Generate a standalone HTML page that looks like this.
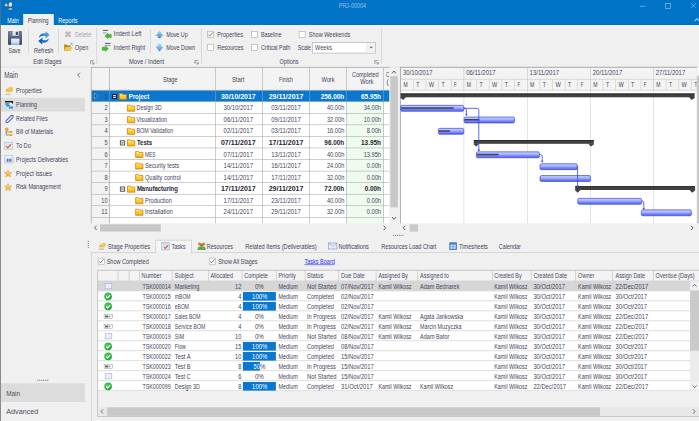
<!DOCTYPE html>
<html><head><meta charset="utf-8"><style>
html,body{margin:0;padding:0;background:#f0f0f0;}
body{width:699px;height:421px;overflow:hidden;}
svg{display:block;font-family:'Liberation Sans', sans-serif;}
</style></head><body>
<svg width="699" height="421" viewBox="0 0 699 421">
<rect x="0" y="0" width="699" height="421" fill="#f0f0f0" />
<rect x="0" y="0" width="699" height="25" fill="#0173c7" />
<g transform="translate(3.6,1.2)"><path d="M4.2 7.2 Q5.6 9.2 7.8 8.6 Q9 8.2 8.8 6.8 Z" fill="#ffffff" stroke="#2a3a55" stroke-width="0.5"/><path d="M0.6 4.2 L2.6 1.2 L3.2 2.8 L4.4 3.6 L3.4 5.8 Z" fill="#d8dce4" stroke="#2a3a55" stroke-width="0.4"/><path d="M5.4 1.2 L7.4 0.8 L8.6 2.4 L8.4 5.4 L6.2 5.8 L5 4 Z" fill="#eef0f4" stroke="#2a3a55" stroke-width="0.4"/><rect x="4.4" y="4.2" width="1" height="1" fill="#6ab4e8"/></g>
<rect x="0" y="0" width="0.8" height="25" fill="#4f7396" />
<text x="338.8" y="7.75" font-size="6.5" fill="#98c0ea" textLength="27.3" lengthAdjust="spacingAndGlyphs" >PRJ-00004</text>
<rect x="640" y="5.85" width="5.5" height="0.7" fill="#8cbce8" />
<rect x="665.6" y="3.6" width="5" height="4.8" fill="none" stroke="#8cbce8" stroke-width="0.7"/>
<path d="M690.8 3.2 L695.8 8.2 M695.8 3.2 L690.8 8.2" fill="none" stroke="#9cc6ec" stroke-width="0.6" />
<text x="7.2" y="22.65" font-size="6.5" fill="#ffffff" textLength="11.6" lengthAdjust="spacingAndGlyphs" >Main</text>
<rect x="23.2" y="14" width="30.6" height="11" fill="#f0f0f0" />
<text x="27.8" y="22.65" font-size="6.5" fill="#3e3e52" textLength="20.8" lengthAdjust="spacingAndGlyphs" >Planning</text>
<text x="58.2" y="22.65" font-size="6.5" fill="#ffffff" textLength="19.4" lengthAdjust="spacingAndGlyphs" >Reports</text>
<path d="M694.8 21 L697 18.6 L699.2 21" fill="none" stroke="#ffffff" stroke-width="0.9" />
<rect x="0" y="25" width="1" height="396" fill="#8a8a8a" />
<rect x="1" y="66.7" width="698" height="0.6" fill="#d6d6d6" />
<defs><linearGradient id="sv" x1="0" y1="0" x2="0" y2="1"><stop offset="0" stop-color="#6c7a98"/><stop offset="1" stop-color="#3c4a6a"/></linearGradient><linearGradient id="svl" x1="0" y1="0" x2="0" y2="1"><stop offset="0" stop-color="#f4f6fa"/><stop offset="0.6" stop-color="#c8dcf2"/><stop offset="1" stop-color="#7ab0e6"/></linearGradient><linearGradient id="rf1" x1="0" y1="0" x2="1" y2="0"><stop offset="0" stop-color="#0e5cc4"/><stop offset="1" stop-color="#5cb2f4"/></linearGradient><linearGradient id="rf2" x1="1" y1="0" x2="0" y2="0"><stop offset="0" stop-color="#2a7ee0"/><stop offset="1" stop-color="#0c56c0"/></linearGradient></defs>
<g transform="translate(8,31)"><rect x="0" y="0" width="14" height="14" rx="1" fill="url(#sv)"/><rect x="2.8" y="0" width="7.9" height="4.7" fill="#e2e6ec"/><rect x="3.2" y="0" width="1.2" height="4.7" fill="#55617c"/><rect x="7.8" y="0.8" width="2.1" height="3.2" fill="#3e4a66"/><rect x="3.1" y="7.6" width="8.3" height="6.4" fill="url(#svl)"/></g>
<text x="8.4" y="53.25" font-size="6.5" fill="#44445a" textLength="12.09" lengthAdjust="spacingAndGlyphs" >Save</text>
<rect x="27.95" y="29" width="0.7" height="24" fill="#cfcfcf" />
<g transform="translate(38,31)"><path d="M0.8 6.8 C1.5 3 5 1.8 7.8 2.4 L7.6 0.2 L11.8 4 L7.4 7.4 L7.6 5 C5 4.4 2.6 5 0.8 6.8 Z" fill="url(#rf1)"/><path d="M11.2 7.2 C10.5 11 7 12.2 4.2 11.6 L4.4 13.8 L0.2 10 L4.6 6.6 L4.4 9 C7 9.6 9.4 9 11.2 7.2 Z" fill="url(#rf2)"/></g>
<text x="33.9" y="53.25" font-size="6.5" fill="#44445a" textLength="19.45" lengthAdjust="spacingAndGlyphs" >Refresh</text>
<rect x="58.25" y="29" width="0.7" height="24" fill="#cfcfcf" />
<g transform="translate(64.5,30.8)"><path d="M1 1 L6 6 M6 1 L1 6" stroke="#bdbdbd" stroke-width="2.2"/></g>
<text x="75" y="36.55" font-size="6.5" fill="#a4a4ae" textLength="16.29" lengthAdjust="spacingAndGlyphs" >Delete</text>
<g transform="translate(63.9,43)"><path d="M0.3 1.6 L2.8 1.6 L3.6 2.6 L6.6 2.6 L6.6 7.8 L0.3 7.8 Z" fill="#b88418"/><path d="M1.6 4 L8.6 4 L7 7.8 L0.3 7.8 Z" fill="#f4c848"/><path d="M6.4 0.3 L8.2 0.3 L8.2 2.6" fill="none" stroke="#6a88b8" stroke-width="0.6"/><path d="M7.2 1.2 L5.6 3.2" stroke="#6a88b8" stroke-width="0.5"/></g>
<text x="75" y="50.25" font-size="6.5" fill="#44445a" textLength="13.14" lengthAdjust="spacingAndGlyphs" >Open</text>
<text x="33.2" y="63.75" font-size="6.5" fill="#3e3e5a" textLength="28.38" lengthAdjust="spacingAndGlyphs" >Edit Stages</text>
<g transform="translate(90.2,60.3)"><path d="M0.4 3.8 L0.4 0.4 L3.8 0.4" stroke="#7a7a7a" stroke-width="0.7" fill="none"/><path d="M1.6 1.6 L3.8 3.8 M3.8 2.2 L3.8 3.8 L2.2 3.8" stroke="#7a7a7a" stroke-width="0.7" fill="none"/></g>
<rect x="96.45" y="28" width="0.7" height="36" fill="#cfcfcf" />
<g transform="translate(102,29.5)"><rect x="0.9" y="0.4" width="5.2" height="1.1" fill="#56668a"/><rect x="0.9" y="2.9" width="3.4" height="0.9" fill="#8090aa"/><path d="M2.8 6.4 L6 3.6 L6 4.9 L9.3 4.9 L9.3 8 L6 8 L6 9.2 Z" fill="#48ba30" stroke="#2f9a22" stroke-width="0.4"/></g>
<text x="113.6" y="36.45" font-size="6.5" fill="#44445a" textLength="27.86" lengthAdjust="spacingAndGlyphs" >Indent Left</text>
<g transform="translate(102,42.5)"><rect x="2.9" y="0.4" width="5.5" height="1.1" fill="#56668a"/><rect x="2.9" y="2.7" width="5.5" height="0.9" fill="#8090aa"/><path d="M6.5 6.2 L3.4 3.5 L3.4 4.7 L0.1 4.7 L0.1 7.8 L3.4 7.8 L3.4 9 Z" fill="#48ba30" stroke="#2f9a22" stroke-width="0.4"/></g>
<text x="113.6" y="49.75" font-size="6.5" fill="#44445a" textLength="31.54" lengthAdjust="spacingAndGlyphs" >Indent Right</text>
<rect x="150.05" y="29" width="0.7" height="24" fill="#cfcfcf" />
<defs><linearGradient id="mu" x1="0" y1="0" x2="0" y2="1"><stop offset="0" stop-color="#b4dcf8"/><stop offset="1" stop-color="#3c82d2"/></linearGradient><linearGradient id="md" x1="0" y1="0" x2="0" y2="1"><stop offset="0" stop-color="#b4dcf8"/><stop offset="1" stop-color="#3c82d2"/></linearGradient></defs>
<g transform="translate(155.9,30.7)"><path d="M3.6 0.2 L7.2 5 L5 5 L5 7.3 L2.2 7.3 L2.2 5 L0 5 Z" fill="url(#mu)" stroke="#5a98d8" stroke-width="0.3"/></g>
<text x="166.2" y="36.65" font-size="6.5" fill="#44445a" textLength="21.55" lengthAdjust="spacingAndGlyphs" >Move Up</text>
<g transform="translate(155.9,43.9)"><path d="M3.6 7.6 L7.2 2.8 L5 2.8 L5 0.3 L2.2 0.3 L2.2 2.8 L0 2.8 Z" fill="url(#md)" stroke="#5a98d8" stroke-width="0.3"/></g>
<text x="166.2" y="49.85" font-size="6.5" fill="#44445a" textLength="28.91" lengthAdjust="spacingAndGlyphs" >Move Down</text>
<text x="129" y="63.75" font-size="6.5" fill="#3e3e5a" textLength="35.22" lengthAdjust="spacingAndGlyphs" >Move / Indent</text>
<g transform="translate(194.5,60.2)"><path d="M0.4 3.8 L0.4 0.4 L3.8 0.4" stroke="#7a7a7a" stroke-width="0.7" fill="none"/><path d="M1.6 1.6 L3.8 3.8 M3.8 2.2 L3.8 3.8 L2.2 3.8" stroke="#7a7a7a" stroke-width="0.7" fill="none"/></g>
<rect x="201.15" y="28" width="0.7" height="36" fill="#cfcfcf" />
<rect x="207.45" y="31.35" width="6.1" height="6.1" fill="#ffffff" stroke="#b4b4b4" stroke-width="0.7"/>
<text x="217.3" y="36.65" font-size="6.5" fill="#44445a" textLength="25.75" lengthAdjust="spacingAndGlyphs" >Properties</text>
<g transform="translate(207.1,31)"><path d="M1.4 3.6 L2.8 5.1 L5.6 1.4" stroke="#5a5a5a" stroke-width="0.75" fill="none"/></g>
<rect x="207.45" y="44.35" width="6.1" height="6.1" fill="#ffffff" stroke="#b4b4b4" stroke-width="0.7"/>
<text x="217.3" y="49.85" font-size="6.5" fill="#44445a" textLength="26.28" lengthAdjust="spacingAndGlyphs" >Resources</text>
<rect x="251.45" y="31.35" width="6.1" height="6.1" fill="#ffffff" stroke="#b4b4b4" stroke-width="0.7"/>
<text x="260.9" y="36.65" font-size="6.5" fill="#44445a" textLength="20.5" lengthAdjust="spacingAndGlyphs" >Baseline</text>
<rect x="251.45" y="44.35" width="6.1" height="6.1" fill="#ffffff" stroke="#b4b4b4" stroke-width="0.7"/>
<text x="260.9" y="49.85" font-size="6.5" fill="#44445a" textLength="29.43" lengthAdjust="spacingAndGlyphs" >Critical Path</text>
<rect x="299.15" y="31.35" width="6.1" height="6.1" fill="#ffffff" stroke="#b4b4b4" stroke-width="0.7"/>
<text x="308.8" y="36.65" font-size="6.5" fill="#44445a" textLength="41.52" lengthAdjust="spacingAndGlyphs" >Show Weekends</text>
<text x="297.8" y="49.85" font-size="6.5" fill="#44445a" textLength="13.14" lengthAdjust="spacingAndGlyphs" >Scale</text>
<rect x="312.3" y="42.5" width="63" height="10.6" fill="#ffffff" stroke="#b0b0b0" stroke-width="0.7"/>
<rect x="366.5" y="42.9" width="8.5" height="9.8" fill="#f2f2f2" />
<rect x="366.25" y="42.9" width="0.5" height="9.9" fill="#e0e0e0" />
<path d="M369.6 46.8 L372.8 46.8 L371.2 48.6 Z" fill="#555" />
<text x="315.1" y="49.85" font-size="6.5" fill="#44445a" textLength="16.82" lengthAdjust="spacingAndGlyphs" >Weeks</text>
<text x="279.6" y="63.75" font-size="6.5" fill="#3e3e5a" textLength="18.92" lengthAdjust="spacingAndGlyphs" >Options</text>
<g transform="translate(374.5,60.2)"><path d="M0.4 3.8 L0.4 0.4 L3.8 0.4" stroke="#7a7a7a" stroke-width="0.7" fill="none"/><path d="M1.6 1.6 L3.8 3.8 M3.8 2.2 L3.8 3.8 L2.2 3.8" stroke="#7a7a7a" stroke-width="0.7" fill="none"/></g>
<rect x="381.35" y="28" width="0.7" height="36" fill="#cfcfcf" />
<text x="4.2" y="78" font-size="8.4" fill="#4e4e60" textLength="13.8" lengthAdjust="spacingAndGlyphs" >Main</text>
<path d="M80 72.6 L77.6 75 L80 77.4" fill="none" stroke="#555" stroke-width="0.8" />
<rect x="1" y="97.8" width="84" height="13.7" fill="#dcdcdc" />
<text x="16.1" y="93.15" font-size="6.5" fill="#44445a" textLength="25.75" lengthAdjust="spacingAndGlyphs" >Properties</text>
<text x="16.1" y="106.9" font-size="6.5" fill="#44445a" textLength="21.02" lengthAdjust="spacingAndGlyphs" >Planning</text>
<text x="16.1" y="120.65" font-size="6.5" fill="#44445a" textLength="31.54" lengthAdjust="spacingAndGlyphs" >Related Files</text>
<text x="16.1" y="134.4" font-size="6.5" fill="#44445a" textLength="36.79" lengthAdjust="spacingAndGlyphs" >Bill of Materials</text>
<text x="16.1" y="148.15" font-size="6.5" fill="#44445a" textLength="14.72" lengthAdjust="spacingAndGlyphs" >To Do</text>
<text x="16.1" y="161.9" font-size="6.5" fill="#44445a" textLength="52.03" lengthAdjust="spacingAndGlyphs" >Projects Deliverables</text>
<text x="16.1" y="175.65" font-size="6.5" fill="#44445a" textLength="35.74" lengthAdjust="spacingAndGlyphs" >Project Issues</text>
<text x="16.1" y="189.4" font-size="6.5" fill="#44445a" textLength="44.68" lengthAdjust="spacingAndGlyphs" >Risk Management</text>
<defs><linearGradient id="st" x1="0" y1="0" x2="0" y2="1"><stop offset="0" stop-color="#ffe27a"/><stop offset="1" stop-color="#f4a828"/></linearGradient></defs>
<g transform="translate(4.9,86.6)"><path d="M0.3 3.6 Q1.6 1.6 3.2 1.4 L5 0.4 L8.1 0.6 L8.1 4.4 Q6 5.6 3.8 5.6 L1.4 5.4 Z" fill="#f0c44c"/><path d="M3.4 2.6 L6 2.2" stroke="#fbe08a" stroke-width="0.6"/><rect x="0.2" y="7.2" width="5.8" height="0.9" fill="#b0b0b0"/></g>
<rect x="10" y="102.5" width="3" height="4" fill="#e6e6e6" />
<g transform="translate(5,100.8)"><rect x="0" y="0.2" width="8" height="1.4" fill="#141414"/><rect x="7" y="0.2" width="1" height="2.6" fill="#141414"/><rect x="0.3" y="2.3" width="3.6" height="1.7" fill="#1a9ae8"/><rect x="1.2" y="4" width="3.8" height="1.7" fill="#1a9ae8"/><rect x="3.9" y="5.7" width="4.1" height="2.1" fill="#1a9ae8"/></g>
<g transform="translate(4.8,114.5)"><path d="M1 6.6 L5.8 1.6 Q7.4 0.2 8.2 1.4 Q8.8 2.4 7.4 3.8 L3.4 7.6 Q2 8.6 1.2 7.6 Q0.6 6.8 1.8 5.6 L5.6 2.2" fill="none" stroke="#4c6cb4" stroke-width="1.1"/></g>
<g transform="translate(4.8,127.6)"><circle cx="2" cy="1.6" r="1.5" fill="#f0b040" stroke="#c88020" stroke-width="0.4"/><path d="M1.4 3 L1.4 7.4 L4 7.4 M1.4 4.4 L4 4.4" stroke="#6a6a6a" stroke-width="0.7" fill="none"/><rect x="4" y="3.4" width="3.8" height="2" rx="0.8" fill="#f0a838"/><rect x="4" y="6.3" width="3.8" height="2" rx="0.8" fill="#f0a838"/></g>
<g transform="translate(4,141.9)"><rect x="0.3" y="0.3" width="8.4" height="7.4" fill="#e2e9f2" stroke="#aebcd2" stroke-width="0.6"/><path d="M2 4.4 L3.8 6 L7 2.4" stroke="#e8583a" stroke-width="1.3" fill="none"/></g>
<g transform="translate(4.2,155.2)"><rect x="0.3" y="0.3" width="8.6" height="7.6" rx="0.6" fill="#dde6f4" stroke="#9fb2d2" stroke-width="0.5"/><rect x="1" y="1" width="7.2" height="1.3" fill="#f4f6fa"/><rect x="2.6" y="3.6" width="1" height="3" fill="#2c5ab0"/><rect x="4.4" y="3.6" width="1" height="3" fill="#2c5ab0"/><rect x="6.2" y="3.6" width="1" height="3" fill="#2c5ab0"/></g>
<g transform="translate(4.3,169.9)"><path d="M3.75 0.2 L4.8 2.6 L7.4 2.8 L5.4 4.5 L6.1 7 L3.75 5.6 L1.4 7 L2.1 4.5 L0.1 2.8 L2.7 2.6 Z" fill="url(#st)" stroke="#dc8a30" stroke-width="0.45"/></g>
<g transform="translate(4.3,183.5)"><path d="M3.75 0.2 L4.8 2.6 L7.4 2.8 L5.4 4.5 L6.1 7 L3.75 5.6 L1.4 7 L2.1 4.5 L0.1 2.8 L2.7 2.6 Z" fill="url(#st)" stroke="#dc8a30" stroke-width="0.45"/></g>
<rect x="37.3" y="379.8" width="1" height="1" fill="#666" />
<rect x="39.3" y="379.8" width="1" height="1" fill="#666" />
<rect x="41.3" y="379.8" width="1" height="1" fill="#666" />
<rect x="43.3" y="379.8" width="1" height="1" fill="#666" />
<rect x="45.3" y="379.8" width="1" height="1" fill="#666" />
<rect x="47.3" y="379.8" width="1" height="1" fill="#666" />
<rect x="1" y="383.2" width="84" height="18.8" fill="#dcdcdc" />
<text x="6.2" y="396.2" font-size="7.6" fill="#4e4e60" textLength="13.8" lengthAdjust="spacingAndGlyphs" >Main</text>
<text x="6.2" y="414.2" font-size="7.6" fill="#4e4e60" textLength="32.2" lengthAdjust="spacingAndGlyphs" >Advanced</text>
<rect x="91.5" y="67.5" width="298" height="156" fill="#ffffff" />
<rect x="91.5" y="67.5" width="298" height="23.5" fill="#f3f3f3" />
<rect x="91.5" y="91" width="18" height="132.5" fill="#f3f3f3" />
<rect x="346.5" y="101.99" width="37" height="121.51" fill="#effbef" />
<rect x="91.5" y="101.44" width="298" height="0.53" fill="#a4a4a4" />
<rect x="91.5" y="113" width="298" height="0.53" fill="#a4a4a4" />
<rect x="91.5" y="124.57" width="298" height="0.53" fill="#a4a4a4" />
<rect x="91.5" y="136.13" width="298" height="0.53" fill="#a4a4a4" />
<rect x="91.5" y="147.69" width="298" height="0.53" fill="#a4a4a4" />
<rect x="91.5" y="159.26" width="298" height="0.53" fill="#a4a4a4" />
<rect x="91.5" y="170.82" width="298" height="0.53" fill="#a4a4a4" />
<rect x="91.5" y="182.38" width="298" height="0.53" fill="#a4a4a4" />
<rect x="91.5" y="193.95" width="298" height="0.53" fill="#a4a4a4" />
<rect x="91.5" y="205.51" width="298" height="0.53" fill="#a4a4a4" />
<rect x="91.5" y="217.07" width="298" height="0.53" fill="#a4a4a4" />
<rect x="91.5" y="90.4" width="298" height="11.04" fill="#0a77d0" />
<rect x="214.97" y="67.5" width="0.53" height="156" fill="#a0a0a0" />
<rect x="262.27" y="67.5" width="0.53" height="156" fill="#a0a0a0" />
<rect x="309.05" y="67.5" width="0.53" height="156" fill="#a0a0a0" />
<rect x="346.37" y="67.5" width="0.53" height="156" fill="#a0a0a0" />
<rect x="383.16" y="67.5" width="0.53" height="156" fill="#a0a0a0" />
<rect x="109.32" y="67.5" width="0.53" height="156" fill="#8c8c8c" />
<rect x="91.5" y="89.88" width="298" height="0.53" fill="#a0a0a0" />
<rect x="91" y="67.28" width="298.5" height="0.53" fill="#8c8c8c" />
<rect x="90.93" y="67" width="0.53" height="156.5" fill="#8c8c8c" />
<text x="162.9" y="81.85" font-size="6.5" fill="#44445a" textLength="14.72" lengthAdjust="spacingAndGlyphs" >Stage</text>
<text x="231.9" y="81.85" font-size="6.5" fill="#44445a" textLength="12.61" lengthAdjust="spacingAndGlyphs" >Start</text>
<text x="279.1" y="81.85" font-size="6.5" fill="#44445a" textLength="13.67" lengthAdjust="spacingAndGlyphs" >Finish</text>
<text x="321.4" y="81.85" font-size="6.5" fill="#44445a" textLength="13.14" lengthAdjust="spacingAndGlyphs" >Work</text>
<text x="351.9" y="77.35" font-size="6.5" fill="#44445a" textLength="26.81" lengthAdjust="spacingAndGlyphs" >Completed</text>
<text x="360.3" y="84.35" font-size="6.5" fill="#44445a" textLength="13.14" lengthAdjust="spacingAndGlyphs" >Work</text>
<text x="385.9" y="77.35" font-size="6.5" fill="#44445a" textLength="3.15" lengthAdjust="spacingAndGlyphs" >C</text>
<text x="386.6" y="84.35" font-size="6.5" fill="#44445a" textLength="2.1" lengthAdjust="spacingAndGlyphs" >(</text>
<defs><linearGradient id="fg" x1="0" y1="0" x2="0" y2="1"><stop offset="0" stop-color="#fff29a"/><stop offset="0.45" stop-color="#fbd52a"/><stop offset="1" stop-color="#f0b410"/></linearGradient></defs>
<text x="107.6" y="98.78" font-size="6.5" text-anchor="end" fill="#1d3d70" textLength="3.15" lengthAdjust="spacingAndGlyphs" >1</text>
<rect x="112.1" y="94.13" width="4.7" height="4.7" fill="#161616" />
<rect x="113" y="95.13" width="2.9" height="2.7" fill="#ffffff" />
<rect x="113" y="96.13" width="2.9" height="0.7" fill="#161616" />
<g transform="translate(118.9,93.13)"><path d="M0.35 0.35 L3.2 0.35 L3.9 1.3 L7.65 1.3 L7.65 6.4 L0.35 6.4 Z" fill="url(#fg)" stroke="#cc6e16" stroke-width="0.7"/></g>
<text x="128.7" y="98.78" font-size="6.4" font-weight="bold" fill="#ffffff" textLength="20.5" lengthAdjust="spacingAndGlyphs" >Project</text>
<text x="238.3" y="98.78" font-size="6.4" font-weight="bold" text-anchor="middle" fill="#ffffff" textLength="34.69" lengthAdjust="spacingAndGlyphs" >30/10/2017</text>
<text x="286" y="98.78" font-size="6.4" font-weight="bold" text-anchor="middle" fill="#ffffff" textLength="34.69" lengthAdjust="spacingAndGlyphs" >29/11/2017</text>
<text x="344.3" y="98.78" font-size="6.4" font-weight="bold" text-anchor="end" fill="#ffffff" textLength="23.65" lengthAdjust="spacingAndGlyphs" >256.00h</text>
<text x="381" y="98.78" font-size="6.4" font-weight="bold" text-anchor="end" fill="#ffffff" textLength="19.97" lengthAdjust="spacingAndGlyphs" >65.95h</text>
<text x="107.6" y="110.34" font-size="6.5" text-anchor="end" fill="#44445a" textLength="3.15" lengthAdjust="spacingAndGlyphs" >2</text>
<g transform="translate(127.1,104.79)"><path d="M0.35 0.35 L3.2 0.35 L3.9 1.3 L7.65 1.3 L7.65 6.4 L0.35 6.4 Z" fill="url(#fg)" stroke="#cc6e16" stroke-width="0.7"/></g>
<text x="136.5" y="110.34" font-size="6.5" fill="#44445a" textLength="25.23" lengthAdjust="spacingAndGlyphs" >Design 3D</text>
<text x="238.3" y="110.34" font-size="6.5" text-anchor="middle" fill="#44445a" textLength="29.43" lengthAdjust="spacingAndGlyphs" >30/10/2017</text>
<text x="286" y="110.34" font-size="6.5" text-anchor="middle" fill="#44445a" textLength="29.43" lengthAdjust="spacingAndGlyphs" >03/11/2017</text>
<text x="344.3" y="110.34" font-size="6.5" text-anchor="end" fill="#44445a" textLength="17.34" lengthAdjust="spacingAndGlyphs" >40.00h</text>
<text x="381" y="110.34" font-size="6.5" text-anchor="end" fill="#44445a" textLength="17.34" lengthAdjust="spacingAndGlyphs" >34.00h</text>
<text x="107.6" y="121.91" font-size="6.5" text-anchor="end" fill="#44445a" textLength="3.15" lengthAdjust="spacingAndGlyphs" >3</text>
<g transform="translate(127.1,116.36)"><path d="M0.35 0.35 L3.2 0.35 L3.9 1.3 L7.65 1.3 L7.65 6.4 L0.35 6.4 Z" fill="url(#fg)" stroke="#cc6e16" stroke-width="0.7"/></g>
<text x="136.5" y="121.91" font-size="6.5" fill="#44445a" textLength="30.48" lengthAdjust="spacingAndGlyphs" >Visualization</text>
<text x="238.3" y="121.91" font-size="6.5" text-anchor="middle" fill="#44445a" textLength="29.43" lengthAdjust="spacingAndGlyphs" >06/11/2017</text>
<text x="286" y="121.91" font-size="6.5" text-anchor="middle" fill="#44445a" textLength="29.43" lengthAdjust="spacingAndGlyphs" >09/11/2017</text>
<text x="344.3" y="121.91" font-size="6.5" text-anchor="end" fill="#44445a" textLength="17.34" lengthAdjust="spacingAndGlyphs" >32.00h</text>
<text x="381" y="121.91" font-size="6.5" text-anchor="end" fill="#44445a" textLength="17.34" lengthAdjust="spacingAndGlyphs" >10.00h</text>
<text x="107.6" y="133.47" font-size="6.5" text-anchor="end" fill="#44445a" textLength="3.15" lengthAdjust="spacingAndGlyphs" >4</text>
<g transform="translate(127.1,127.92)"><path d="M0.35 0.35 L3.2 0.35 L3.9 1.3 L7.65 1.3 L7.65 6.4 L0.35 6.4 Z" fill="url(#fg)" stroke="#cc6e16" stroke-width="0.7"/></g>
<text x="136.5" y="133.47" font-size="6.5" fill="#44445a" textLength="36.79" lengthAdjust="spacingAndGlyphs" >BOM Validation</text>
<text x="238.3" y="133.47" font-size="6.5" text-anchor="middle" fill="#44445a" textLength="29.43" lengthAdjust="spacingAndGlyphs" >02/11/2017</text>
<text x="286" y="133.47" font-size="6.5" text-anchor="middle" fill="#44445a" textLength="29.43" lengthAdjust="spacingAndGlyphs" >03/11/2017</text>
<text x="344.3" y="133.47" font-size="6.5" text-anchor="end" fill="#44445a" textLength="17.34" lengthAdjust="spacingAndGlyphs" >16.00h</text>
<text x="381" y="133.47" font-size="6.5" text-anchor="end" fill="#44445a" textLength="14.19" lengthAdjust="spacingAndGlyphs" >8.00h</text>
<text x="107.6" y="145.03" font-size="6.5" text-anchor="end" fill="#44445a" textLength="3.15" lengthAdjust="spacingAndGlyphs" >5</text>
<rect x="120.35" y="140.73" width="4.3" height="4.3" fill="#f4f4f4" stroke="#505050" stroke-width="0.9"/>
<rect x="121.3" y="142.48" width="2.4" height="0.8" fill="#3a3a3a" />
<g transform="translate(127.1,139.48)"><path d="M0.35 0.35 L3.2 0.35 L3.9 1.3 L7.65 1.3 L7.65 6.4 L0.35 6.4 Z" fill="url(#fg)" stroke="#cc6e16" stroke-width="0.7"/></g>
<text x="136.9" y="145.03" font-size="6.4" font-weight="bold" fill="#262632" textLength="15.24" lengthAdjust="spacingAndGlyphs" >Tests</text>
<text x="238.3" y="145.03" font-size="6.4" font-weight="bold" text-anchor="middle" fill="#262632" textLength="34.69" lengthAdjust="spacingAndGlyphs" >07/11/2017</text>
<text x="286" y="145.03" font-size="6.4" font-weight="bold" text-anchor="middle" fill="#262632" textLength="34.69" lengthAdjust="spacingAndGlyphs" >17/11/2017</text>
<text x="344.3" y="145.03" font-size="6.4" font-weight="bold" text-anchor="end" fill="#262632" textLength="19.97" lengthAdjust="spacingAndGlyphs" >96.00h</text>
<text x="381" y="145.03" font-size="6.4" font-weight="bold" text-anchor="end" fill="#262632" textLength="19.97" lengthAdjust="spacingAndGlyphs" >13.95h</text>
<text x="107.6" y="156.59" font-size="6.5" text-anchor="end" fill="#44445a" textLength="3.15" lengthAdjust="spacingAndGlyphs" >6</text>
<g transform="translate(135.3,151.05)"><path d="M0.35 0.35 L3.2 0.35 L3.9 1.3 L7.65 1.3 L7.65 6.4 L0.35 6.4 Z" fill="url(#fg)" stroke="#cc6e16" stroke-width="0.7"/></g>
<text x="145" y="156.59" font-size="6.5" fill="#44445a" textLength="10.51" lengthAdjust="spacingAndGlyphs" >MES</text>
<text x="238.3" y="156.59" font-size="6.5" text-anchor="middle" fill="#44445a" textLength="29.43" lengthAdjust="spacingAndGlyphs" >07/11/2017</text>
<text x="286" y="156.59" font-size="6.5" text-anchor="middle" fill="#44445a" textLength="29.43" lengthAdjust="spacingAndGlyphs" >13/11/2017</text>
<text x="344.3" y="156.59" font-size="6.5" text-anchor="end" fill="#44445a" textLength="17.34" lengthAdjust="spacingAndGlyphs" >40.00h</text>
<text x="381" y="156.59" font-size="6.5" text-anchor="end" fill="#44445a" textLength="17.34" lengthAdjust="spacingAndGlyphs" >13.95h</text>
<text x="107.6" y="168.16" font-size="6.5" text-anchor="end" fill="#44445a" textLength="3.15" lengthAdjust="spacingAndGlyphs" >7</text>
<g transform="translate(135.3,162.61)"><path d="M0.35 0.35 L3.2 0.35 L3.9 1.3 L7.65 1.3 L7.65 6.4 L0.35 6.4 Z" fill="url(#fg)" stroke="#cc6e16" stroke-width="0.7"/></g>
<text x="145" y="168.16" font-size="6.5" fill="#44445a" textLength="34.16" lengthAdjust="spacingAndGlyphs" >Security tests</text>
<text x="238.3" y="168.16" font-size="6.5" text-anchor="middle" fill="#44445a" textLength="29.43" lengthAdjust="spacingAndGlyphs" >14/11/2017</text>
<text x="286" y="168.16" font-size="6.5" text-anchor="middle" fill="#44445a" textLength="29.43" lengthAdjust="spacingAndGlyphs" >16/11/2017</text>
<text x="344.3" y="168.16" font-size="6.5" text-anchor="end" fill="#44445a" textLength="17.34" lengthAdjust="spacingAndGlyphs" >24.00h</text>
<text x="381" y="168.16" font-size="6.5" text-anchor="end" fill="#44445a" textLength="14.19" lengthAdjust="spacingAndGlyphs" >0.00h</text>
<text x="107.6" y="179.72" font-size="6.5" text-anchor="end" fill="#44445a" textLength="3.15" lengthAdjust="spacingAndGlyphs" >8</text>
<g transform="translate(135.3,174.17)"><path d="M0.35 0.35 L3.2 0.35 L3.9 1.3 L7.65 1.3 L7.65 6.4 L0.35 6.4 Z" fill="url(#fg)" stroke="#cc6e16" stroke-width="0.7"/></g>
<text x="145" y="179.72" font-size="6.5" fill="#44445a" textLength="35.74" lengthAdjust="spacingAndGlyphs" >Quality control</text>
<text x="238.3" y="179.72" font-size="6.5" text-anchor="middle" fill="#44445a" textLength="29.43" lengthAdjust="spacingAndGlyphs" >14/11/2017</text>
<text x="286" y="179.72" font-size="6.5" text-anchor="middle" fill="#44445a" textLength="29.43" lengthAdjust="spacingAndGlyphs" >17/11/2017</text>
<text x="344.3" y="179.72" font-size="6.5" text-anchor="end" fill="#44445a" textLength="17.34" lengthAdjust="spacingAndGlyphs" >32.00h</text>
<text x="381" y="179.72" font-size="6.5" text-anchor="end" fill="#44445a" textLength="14.19" lengthAdjust="spacingAndGlyphs" >0.00h</text>
<text x="107.6" y="191.28" font-size="6.5" text-anchor="end" fill="#44445a" textLength="3.15" lengthAdjust="spacingAndGlyphs" >9</text>
<rect x="120.35" y="186.98" width="4.3" height="4.3" fill="#f4f4f4" stroke="#505050" stroke-width="0.9"/>
<rect x="121.3" y="188.73" width="2.4" height="0.8" fill="#3a3a3a" />
<g transform="translate(127.1,185.73)"><path d="M0.35 0.35 L3.2 0.35 L3.9 1.3 L7.65 1.3 L7.65 6.4 L0.35 6.4 Z" fill="url(#fg)" stroke="#cc6e16" stroke-width="0.7"/></g>
<text x="136.9" y="191.28" font-size="6.4" font-weight="bold" fill="#262632" textLength="41" lengthAdjust="spacingAndGlyphs" >Manufacturing</text>
<text x="238.3" y="191.28" font-size="6.4" font-weight="bold" text-anchor="middle" fill="#262632" textLength="34.69" lengthAdjust="spacingAndGlyphs" >17/11/2017</text>
<text x="286" y="191.28" font-size="6.4" font-weight="bold" text-anchor="middle" fill="#262632" textLength="34.69" lengthAdjust="spacingAndGlyphs" >29/11/2017</text>
<text x="344.3" y="191.28" font-size="6.4" font-weight="bold" text-anchor="end" fill="#262632" textLength="19.97" lengthAdjust="spacingAndGlyphs" >72.00h</text>
<text x="381" y="191.28" font-size="6.4" font-weight="bold" text-anchor="end" fill="#262632" textLength="16.29" lengthAdjust="spacingAndGlyphs" >0.00h</text>
<text x="107.6" y="202.85" font-size="6.5" text-anchor="end" fill="#44445a" textLength="6.31" lengthAdjust="spacingAndGlyphs" >10</text>
<g transform="translate(135.3,197.3)"><path d="M0.35 0.35 L3.2 0.35 L3.9 1.3 L7.65 1.3 L7.65 6.4 L0.35 6.4 Z" fill="url(#fg)" stroke="#cc6e16" stroke-width="0.7"/></g>
<text x="145" y="202.85" font-size="6.5" fill="#44445a" textLength="26.81" lengthAdjust="spacingAndGlyphs" >Production</text>
<text x="238.3" y="202.85" font-size="6.5" text-anchor="middle" fill="#44445a" textLength="29.43" lengthAdjust="spacingAndGlyphs" >17/11/2017</text>
<text x="286" y="202.85" font-size="6.5" text-anchor="middle" fill="#44445a" textLength="29.43" lengthAdjust="spacingAndGlyphs" >23/11/2017</text>
<text x="344.3" y="202.85" font-size="6.5" text-anchor="end" fill="#44445a" textLength="17.34" lengthAdjust="spacingAndGlyphs" >40.00h</text>
<text x="381" y="202.85" font-size="6.5" text-anchor="end" fill="#44445a" textLength="14.19" lengthAdjust="spacingAndGlyphs" >0.00h</text>
<text x="107.6" y="214.41" font-size="6.5" text-anchor="end" fill="#44445a" textLength="6.31" lengthAdjust="spacingAndGlyphs" >11</text>
<g transform="translate(135.3,208.86)"><path d="M0.35 0.35 L3.2 0.35 L3.9 1.3 L7.65 1.3 L7.65 6.4 L0.35 6.4 Z" fill="url(#fg)" stroke="#cc6e16" stroke-width="0.7"/></g>
<text x="145" y="214.41" font-size="6.5" fill="#44445a" textLength="27.86" lengthAdjust="spacingAndGlyphs" >Installation</text>
<text x="238.3" y="214.41" font-size="6.5" text-anchor="middle" fill="#44445a" textLength="29.43" lengthAdjust="spacingAndGlyphs" >24/11/2017</text>
<text x="286" y="214.41" font-size="6.5" text-anchor="middle" fill="#44445a" textLength="29.43" lengthAdjust="spacingAndGlyphs" >29/11/2017</text>
<text x="344.3" y="214.41" font-size="6.5" text-anchor="end" fill="#44445a" textLength="17.34" lengthAdjust="spacingAndGlyphs" >32.00h</text>
<text x="381" y="214.41" font-size="6.5" text-anchor="end" fill="#44445a" textLength="14.19" lengthAdjust="spacingAndGlyphs" >0.00h</text>
<path d="M94.6 93.3 L97.8 96 L94.6 98.7 Z" fill="#3a3a3a" stroke="#d8d8d8" stroke-width="0.5" />
<rect x="389.5" y="67.5" width="10.3" height="156" fill="#f0f0f0" />
<rect x="390.3" y="76.1" width="7.5" height="131.3" fill="#c8c8c8" />
<path d="M392 73.4 L394 71 L396 73.4" fill="none" stroke="#3a3a3a" stroke-width="0.8" />
<path d="M392 217 L394 219.4 L396 217" fill="none" stroke="#3a3a3a" stroke-width="0.8" />
<rect x="91.5" y="223.5" width="298" height="9.5" fill="#f0f0f0" />
<rect x="100" y="224.3" width="60.8" height="7.3" fill="#c8c8c8" />
<path d="M96.6 225.6 L94.6 227.8 L96.6 230" fill="none" stroke="#3a3a3a" stroke-width="0.8" />
<path d="M383.6 225.6 L385.6 227.8 L383.6 230" fill="none" stroke="#3a3a3a" stroke-width="0.8" />
<rect x="400.4" y="67.5" width="298.6" height="156" fill="#ffffff" />
<rect x="400.4" y="67.5" width="298.6" height="22.7" fill="#f3f3f3" />
<text x="403" y="75.35" font-size="6.5" fill="#44445a" textLength="29.43" lengthAdjust="spacingAndGlyphs" >30/10/2017</text>
<text x="403.5" y="87.15" font-size="6.5" fill="#44445a" textLength="4.2" lengthAdjust="spacingAndGlyphs" >M</text>
<rect x="413.04" y="79.2" width="0.6" height="11" fill="#cccccc" />
<text x="416.14" y="87.15" font-size="6.5" fill="#44445a" textLength="3.15" lengthAdjust="spacingAndGlyphs" >T</text>
<rect x="425.68" y="79.2" width="0.6" height="11" fill="#cccccc" />
<text x="428.78" y="87.15" font-size="6.5" fill="#44445a" textLength="5.26" lengthAdjust="spacingAndGlyphs" >W</text>
<rect x="438.32" y="79.2" width="0.6" height="11" fill="#cccccc" />
<text x="441.42" y="87.15" font-size="6.5" fill="#44445a" textLength="3.15" lengthAdjust="spacingAndGlyphs" >T</text>
<rect x="450.96" y="79.2" width="0.6" height="11" fill="#cccccc" />
<text x="454.06" y="87.15" font-size="6.5" fill="#44445a" textLength="2.63" lengthAdjust="spacingAndGlyphs" >F</text>
<rect x="463.6" y="67.5" width="0.6" height="22.7" fill="#c4c4c4" />
<rect x="463.6" y="90.2" width="0.6" height="133.3" fill="#d2d2d2" />
<text x="466.2" y="75.35" font-size="6.5" fill="#44445a" textLength="29.43" lengthAdjust="spacingAndGlyphs" >06/11/2017</text>
<text x="466.7" y="87.15" font-size="6.5" fill="#44445a" textLength="4.2" lengthAdjust="spacingAndGlyphs" >M</text>
<rect x="476.28" y="79.2" width="0.6" height="11" fill="#cccccc" />
<text x="479.38" y="87.15" font-size="6.5" fill="#44445a" textLength="3.15" lengthAdjust="spacingAndGlyphs" >T</text>
<rect x="488.96" y="79.2" width="0.6" height="11" fill="#cccccc" />
<text x="492.06" y="87.15" font-size="6.5" fill="#44445a" textLength="5.26" lengthAdjust="spacingAndGlyphs" >W</text>
<rect x="501.64" y="79.2" width="0.6" height="11" fill="#cccccc" />
<text x="504.74" y="87.15" font-size="6.5" fill="#44445a" textLength="3.15" lengthAdjust="spacingAndGlyphs" >T</text>
<rect x="514.32" y="79.2" width="0.6" height="11" fill="#cccccc" />
<text x="517.42" y="87.15" font-size="6.5" fill="#44445a" textLength="2.63" lengthAdjust="spacingAndGlyphs" >F</text>
<rect x="527" y="67.5" width="0.6" height="22.7" fill="#c4c4c4" />
<rect x="527" y="90.2" width="0.6" height="133.3" fill="#d2d2d2" />
<text x="529.6" y="75.35" font-size="6.5" fill="#44445a" textLength="29.43" lengthAdjust="spacingAndGlyphs" >13/11/2017</text>
<text x="530.1" y="87.15" font-size="6.5" fill="#44445a" textLength="4.2" lengthAdjust="spacingAndGlyphs" >M</text>
<rect x="539.64" y="79.2" width="0.6" height="11" fill="#cccccc" />
<text x="542.74" y="87.15" font-size="6.5" fill="#44445a" textLength="3.15" lengthAdjust="spacingAndGlyphs" >T</text>
<rect x="552.28" y="79.2" width="0.6" height="11" fill="#cccccc" />
<text x="555.38" y="87.15" font-size="6.5" fill="#44445a" textLength="5.26" lengthAdjust="spacingAndGlyphs" >W</text>
<rect x="564.92" y="79.2" width="0.6" height="11" fill="#cccccc" />
<text x="568.02" y="87.15" font-size="6.5" fill="#44445a" textLength="3.15" lengthAdjust="spacingAndGlyphs" >T</text>
<rect x="577.56" y="79.2" width="0.6" height="11" fill="#cccccc" />
<text x="580.66" y="87.15" font-size="6.5" fill="#44445a" textLength="2.63" lengthAdjust="spacingAndGlyphs" >F</text>
<rect x="590.2" y="67.5" width="0.6" height="22.7" fill="#c4c4c4" />
<rect x="590.2" y="90.2" width="0.6" height="133.3" fill="#d2d2d2" />
<text x="592.8" y="75.35" font-size="6.5" fill="#44445a" textLength="29.43" lengthAdjust="spacingAndGlyphs" >20/11/2017</text>
<text x="593.3" y="87.15" font-size="6.5" fill="#44445a" textLength="4.2" lengthAdjust="spacingAndGlyphs" >M</text>
<rect x="602.8" y="79.2" width="0.6" height="11" fill="#cccccc" />
<text x="605.9" y="87.15" font-size="6.5" fill="#44445a" textLength="3.15" lengthAdjust="spacingAndGlyphs" >T</text>
<rect x="615.4" y="79.2" width="0.6" height="11" fill="#cccccc" />
<text x="618.5" y="87.15" font-size="6.5" fill="#44445a" textLength="5.26" lengthAdjust="spacingAndGlyphs" >W</text>
<rect x="628" y="79.2" width="0.6" height="11" fill="#cccccc" />
<text x="631.1" y="87.15" font-size="6.5" fill="#44445a" textLength="3.15" lengthAdjust="spacingAndGlyphs" >T</text>
<rect x="640.6" y="79.2" width="0.6" height="11" fill="#cccccc" />
<text x="643.7" y="87.15" font-size="6.5" fill="#44445a" textLength="2.63" lengthAdjust="spacingAndGlyphs" >F</text>
<rect x="653.2" y="67.5" width="0.6" height="22.7" fill="#c4c4c4" />
<rect x="653.2" y="90.2" width="0.6" height="133.3" fill="#d2d2d2" />
<text x="655.8" y="75.35" font-size="6.5" fill="#44445a" textLength="29.43" lengthAdjust="spacingAndGlyphs" >27/11/2017</text>
<text x="656.3" y="87.15" font-size="6.5" fill="#44445a" textLength="4.2" lengthAdjust="spacingAndGlyphs" >M</text>
<rect x="665.84" y="79.2" width="0.6" height="11" fill="#cccccc" />
<text x="668.94" y="87.15" font-size="6.5" fill="#44445a" textLength="3.15" lengthAdjust="spacingAndGlyphs" >T</text>
<rect x="678.48" y="79.2" width="0.6" height="11" fill="#cccccc" />
<text x="681.58" y="87.15" font-size="6.5" fill="#44445a" textLength="5.26" lengthAdjust="spacingAndGlyphs" >W</text>
<rect x="691.12" y="79.2" width="0.6" height="11" fill="#cccccc" />
<text x="694.22" y="87.15" font-size="6.5" fill="#44445a" textLength="3.15" lengthAdjust="spacingAndGlyphs" >T</text>
<rect x="703.76" y="79.2" width="0.6" height="11" fill="#cccccc" />
<text x="706.86" y="87.15" font-size="6.5" fill="#44445a" textLength="2.63" lengthAdjust="spacingAndGlyphs" >F</text>
<rect x="400.4" y="78.9" width="298.6" height="0.6" fill="#c8c8c8" />
<rect x="400.4" y="89.9" width="298.6" height="0.6" fill="#c8c8c8" />
<rect x="400" y="66.9" width="297" height="0.8" fill="#a0a0a0" />
<rect x="400.1" y="67" width="0.8" height="156.5" fill="#a0a0a0" />
<defs><linearGradient id="tb" x1="0" y1="0" x2="0" y2="1"><stop offset="0" stop-color="#ccd3fb"/><stop offset="0.45" stop-color="#a4aff7"/><stop offset="0.6" stop-color="#8390f4"/><stop offset="1" stop-color="#5062ee"/></linearGradient></defs>
<rect x="400.6" y="93.5" width="294" height="3.8" fill="#404040" />
<rect x="400.6" y="93.5" width="294" height="0.8" fill="#262626" />
<path d="M400.6 97.1 L406 97.1 L403.2 100.1 L400.6 97.9 Z" fill="#404040" />
<path d="M694.6 97.1 L689 97.1 L691.6 100.1 L694.6 97.9 Z" fill="#404040" />
<rect x="473.8" y="140" width="120" height="3.8" fill="#404040" />
<rect x="473.8" y="140" width="120" height="0.8" fill="#262626" />
<path d="M473.8 143.6 L479.2 143.6 L476.4 146.6 L473.8 144.4 Z" fill="#404040" />
<path d="M593.8 143.6 L588.2 143.6 L590.8 146.6 L593.8 144.4 Z" fill="#404040" />
<rect x="575.2" y="186.2" width="119.9" height="3.8" fill="#404040" />
<rect x="575.2" y="186.2" width="119.9" height="0.8" fill="#262626" />
<path d="M575.2 189.8 L580.6 189.8 L577.8 192.8 L575.2 190.6 Z" fill="#404040" />
<path d="M695.1 189.8 L689.5 189.8 L692.1 192.8 L695.1 190.6 Z" fill="#404040" />
<rect x="400.65" y="105.35" width="63.1" height="5.9" rx="1.4" fill="url(#tb)" stroke="#3646ee" stroke-width="0.7"/>
<rect x="401.1" y="107.3" width="52.7" height="1.5" fill="#3c4458" />
<rect x="464.05" y="117.05" width="50.4" height="5.9" rx="1.4" fill="url(#tb)" stroke="#3646ee" stroke-width="0.7"/>
<rect x="464.5" y="119" width="14.8" height="1.5" fill="#3c4458" />
<rect x="438.35" y="128.35" width="25.4" height="5.9" rx="1.4" fill="url(#tb)" stroke="#3646ee" stroke-width="0.7"/>
<rect x="438.8" y="130.3" width="11.2" height="1.5" fill="#3c4458" />
<rect x="476.35" y="151.85" width="63.1" height="5.9" rx="1.4" fill="url(#tb)" stroke="#3646ee" stroke-width="0.7"/>
<rect x="476.8" y="153.8" width="21.8" height="1.5" fill="#3c4458" />
<rect x="540.05" y="163.75" width="37.2" height="5.9" rx="1.4" fill="url(#tb)" stroke="#3646ee" stroke-width="0.7"/>
<rect x="540.05" y="175.55" width="50.4" height="5.9" rx="1.4" fill="url(#tb)" stroke="#3646ee" stroke-width="0.7"/>
<rect x="577.75" y="198.35" width="63.9" height="5.9" rx="1.4" fill="url(#tb)" stroke="#3646ee" stroke-width="0.7"/>
<rect x="641.35" y="209.85" width="50.1" height="5.9" rx="1.4" fill="url(#tb)" stroke="#3646ee" stroke-width="0.7"/>
<g transform="translate(400,90)">
<path d="M64 18.3 L77 18.3 Q78.8 18.3 78.8 20 L78.8 61" stroke="#3344f0" stroke-width="0.8" fill="none"/>
<path d="M64 18.3 L65 18.3 Q66.4 18.3 66.4 20 L66.4 24.5" stroke="#3344f0" stroke-width="0.8" fill="none"/>
<path d="M65.2 24 L67.6 24 L66.4 26 Z" fill="#3344f0"/>
<path d="M77.6 59.5 L80 59.5 L78.8 61.5 Z" fill="#3344f0"/>
<path d="M139.8 64.5 L140.5 64.5 Q142.2 64.5 142.2 66.5 L142.2 71.5" stroke="#3344f0" stroke-width="0.8" fill="none"/>
<path d="M141 70.8 L143.4 70.8 L142.2 72.8 Z" fill="#3344f0"/>
<path d="M177.6 76 L177.6 96" stroke="#3344f0" stroke-width="0.8" fill="none"/>
<path d="M176.4 95.5 L178.8 95.5 L177.6 97.5 Z" fill="#3344f0"/>
<path d="M242 111 L242.5 111 Q243.8 111 243.8 113 L243.8 118.5" stroke="#3344f0" stroke-width="0.8" fill="none"/>
<path d="M242.6 118 L245 118 L243.8 120 Z" fill="#3344f0"/>
</g>
<rect x="696.8" y="75.7" width="2.2" height="147.8" fill="#c8c8c8" />
<rect x="400.4" y="223.5" width="298.6" height="9.5" fill="#f0f0f0" />
<rect x="409.7" y="224.3" width="8.3" height="7.3" fill="#c8c8c8" />
<path d="M405.2 225.6 L403.2 227.8 L405.2 230" fill="none" stroke="#3a3a3a" stroke-width="0.8" />
<path d="M691 225.6 L693 227.8 L691 230" fill="none" stroke="#3a3a3a" stroke-width="0.8" />
<rect x="393" y="234.9" width="0.9" height="0.9" fill="#555" />
<rect x="394.9" y="234.9" width="0.9" height="0.9" fill="#555" />
<rect x="396.8" y="234.9" width="0.9" height="0.9" fill="#555" />
<rect x="398.7" y="234.9" width="0.9" height="0.9" fill="#555" />
<rect x="400.6" y="234.9" width="0.9" height="0.9" fill="#555" />
<rect x="402.5" y="234.9" width="0.9" height="0.9" fill="#555" />
<rect x="87.8" y="240.8" width="0.9" height="0.9" fill="#555" />
<rect x="87.8" y="242.9" width="0.9" height="0.9" fill="#555" />
<rect x="87.8" y="245" width="0.9" height="0.9" fill="#555" />
<rect x="87.8" y="247.1" width="0.9" height="0.9" fill="#555" />
<path d="M155.7 252.6 L155.7 240.2 L191.5 240.2 L191.5 252.6" fill="#f5f5f5" stroke="#c4c4c4" stroke-width="0.6"/>
<rect x="91.4" y="252.3" width="64.3" height="0.6" fill="#c4c4c4" />
<rect x="191.5" y="252.3" width="507.5" height="0.6" fill="#c4c4c4" />
<rect x="91.1" y="252.6" width="0.6" height="168.4" fill="#c4c4c4" />
<g transform="translate(98.5,242.4)"><path d="M0.3 3.6 Q1.6 1.6 3.2 1.4 L5 0.4 L7.1 0.6 L7.1 4.2 Q5.6 5.2 3.8 5.2 L1.4 5 Z" fill="#f0c44c"/><path d="M3.4 2.4 L5.6 2" stroke="#fbe08a" stroke-width="0.6"/><rect x="0.2" y="6.2" width="5.6" height="1" fill="#b0b0b0"/></g>
<text x="108.1" y="248.95" font-size="6.5" fill="#44445a" textLength="42.05" lengthAdjust="spacingAndGlyphs" >Stage Properties</text>
<g transform="translate(161.4,242)"><rect x="0.4" y="0.4" width="7.6" height="7.6" fill="#dde5f2" stroke="#9aaed0" stroke-width="0.6"/><rect x="1.4" y="1.6" width="4" height="0.6" fill="#b0bcd0"/><path d="M2.6 5 L3.9 6.4 L6.9 3.2" stroke="#ea4646" stroke-width="1.1" fill="none"/></g>
<text x="171.4" y="248.95" font-size="6.5" fill="#44445a" textLength="14.19" lengthAdjust="spacingAndGlyphs" >Tasks</text>
<g transform="translate(197.2,241.6)"><circle cx="2.3" cy="2.4" r="1.6" fill="#c8864a"/><circle cx="6.5" cy="2.4" r="1.6" fill="#c8864a"/><circle cx="4.4" cy="3.6" r="1.6" fill="#b87038"/><path d="M0.4 8.4 Q0.4 5 2.4 5 L6.4 5 Q8.6 5 8.6 8.4 Z" fill="#62aa3e"/></g>
<text x="206.7" y="248.95" font-size="6.5" fill="#44445a" textLength="26.28" lengthAdjust="spacingAndGlyphs" >Resources</text>
<text x="245.2" y="248.95" font-size="6.5" fill="#44445a" textLength="71.48" lengthAdjust="spacingAndGlyphs" >Related Items (Deliverables)</text>
<g transform="translate(328.3,242.6)"><rect x="0.4" y="0.4" width="8.2" height="6" fill="#e9eff8" stroke="#7c92c2" stroke-width="0.6"/><path d="M0.4 0.4 L4.5 3.8 L8.6 0.4" stroke="#7c92c2" stroke-width="0.6" fill="none"/></g>
<text x="338.4" y="248.95" font-size="6.5" fill="#44445a" textLength="30.48" lengthAdjust="spacingAndGlyphs" >Notifications</text>
<text x="381.2" y="248.95" font-size="6.5" fill="#44445a" textLength="55.19" lengthAdjust="spacingAndGlyphs" >Resources Load Chart</text>
<g transform="translate(449,242)"><rect x="0.3" y="0.3" width="7.6" height="7.6" fill="#3c7acc"/><rect x="1.4" y="2.6" width="5.4" height="4.2" fill="#cfe0f6"/><path d="M1.4 4.7 L6.8 4.7 M4.1 2.6 L4.1 6.8" stroke="#3c7acc" stroke-width="0.5"/></g>
<text x="459" y="248.95" font-size="6.5" fill="#44445a" textLength="28.91" lengthAdjust="spacingAndGlyphs" >Timesheets</text>
<text x="498.8" y="248.95" font-size="6.5" fill="#44445a" textLength="22.08" lengthAdjust="spacingAndGlyphs" >Calendar</text>
<rect x="98.15" y="258.15" width="6.1" height="6.1" fill="#ffffff" stroke="#b4b4b4" stroke-width="0.7"/>
<g transform="translate(97.8,257.8)"><path d="M1.4 3.6 L2.8 5.1 L5.6 1.4" stroke="#5a5a5a" stroke-width="0.75" fill="none"/></g>
<text x="106.7" y="263.95" font-size="6.5" fill="#44445a" textLength="42.05" lengthAdjust="spacingAndGlyphs" >Show Completed</text>
<rect x="209.25" y="258.15" width="6.1" height="6.1" fill="#ffffff" stroke="#b4b4b4" stroke-width="0.7"/>
<g transform="translate(208.9,257.8)"><path d="M1.4 3.6 L2.8 5.1 L5.6 1.4" stroke="#5a5a5a" stroke-width="0.75" fill="none"/></g>
<text x="218.2" y="263.95" font-size="6.5" fill="#44445a" textLength="39.42" lengthAdjust="spacingAndGlyphs" >Show All Stages</text>
<text x="304.4" y="263.75" font-size="6.5" fill="#2a2af6" textLength="30.48" lengthAdjust="spacingAndGlyphs" >Tasks Board</text>
<rect x="304.4" y="264.5" width="30.1" height="0.6" fill="#2a2af6" />
<rect x="97.6" y="270" width="601.4" height="146.5" fill="#f0f0f0" />
<rect x="97.6" y="270" width="601.4" height="11.2" fill="#f3f3f3" />
<rect x="97.6" y="281.2" width="592.7" height="110" fill="#ffffff" />
<rect x="97.6" y="281.2" width="592.7" height="9.5" fill="#d6d6d6" />
<rect x="97.6" y="290.66" width="592.7" height="0.53" fill="#c0c0c0" />
<rect x="97.6" y="300.64" width="592.7" height="0.53" fill="#c0c0c0" />
<rect x="97.6" y="310.63" width="592.7" height="0.53" fill="#c0c0c0" />
<rect x="97.6" y="320.62" width="592.7" height="0.53" fill="#c0c0c0" />
<rect x="97.6" y="330.6" width="592.7" height="0.53" fill="#c0c0c0" />
<rect x="97.6" y="340.59" width="592.7" height="0.53" fill="#c0c0c0" />
<rect x="97.6" y="350.58" width="592.7" height="0.53" fill="#c0c0c0" />
<rect x="97.6" y="360.56" width="592.7" height="0.53" fill="#c0c0c0" />
<rect x="97.6" y="370.55" width="592.7" height="0.53" fill="#c0c0c0" />
<rect x="97.6" y="380.53" width="592.7" height="0.53" fill="#c0c0c0" />
<rect x="97.6" y="390.52" width="592.7" height="0.53" fill="#c0c0c0" />
<rect x="117.73" y="270.5" width="0.53" height="10.7" fill="#b8b8b8" />
<rect x="128.77" y="270.5" width="0.53" height="10.7" fill="#b8b8b8" />
<rect x="139.28" y="270.5" width="0.53" height="10.7" fill="#b8b8b8" />
<rect x="171.87" y="270.5" width="0.53" height="10.7" fill="#b8b8b8" />
<rect x="208.14" y="270.5" width="0.53" height="10.7" fill="#b8b8b8" />
<rect x="241.78" y="270.5" width="0.53" height="10.7" fill="#b8b8b8" />
<rect x="276.47" y="270.5" width="0.53" height="10.7" fill="#b8b8b8" />
<rect x="304.85" y="270.5" width="0.53" height="10.7" fill="#b8b8b8" />
<rect x="338.49" y="270.5" width="0.53" height="10.7" fill="#b8b8b8" />
<rect x="375.8" y="270.5" width="0.53" height="10.7" fill="#b8b8b8" />
<rect x="417.33" y="270.5" width="0.53" height="10.7" fill="#b8b8b8" />
<rect x="492.49" y="270.5" width="0.53" height="10.7" fill="#b8b8b8" />
<rect x="530.86" y="270.5" width="0.53" height="10.7" fill="#b8b8b8" />
<rect x="575.01" y="270.5" width="0.53" height="10.7" fill="#b8b8b8" />
<rect x="612.32" y="270.5" width="0.53" height="10.7" fill="#b8b8b8" />
<rect x="653.32" y="270.5" width="0.53" height="10.7" fill="#b8b8b8" />
<rect x="97.6" y="280.7" width="601.4" height="0.6" fill="#c8c8c8" />
<rect x="97.6" y="269.85" width="601.4" height="0.7" fill="#b4b4b4" />
<rect x="97.35" y="270" width="0.7" height="146.5" fill="#b4b4b4" />
<rect x="97.6" y="416.05" width="601.4" height="0.7" fill="#b4b4b4" />
<text x="141.6" y="277.75" font-size="6.5" fill="#48486a" textLength="19.97" lengthAdjust="spacingAndGlyphs" >Number</text>
<text x="174.7" y="277.75" font-size="6.5" fill="#48486a" textLength="18.92" lengthAdjust="spacingAndGlyphs" >Subject</text>
<text x="210.4" y="277.75" font-size="6.5" fill="#48486a" textLength="22.6" lengthAdjust="spacingAndGlyphs" >Allocated</text>
<text x="244.3" y="277.75" font-size="6.5" fill="#48486a" textLength="23.65" lengthAdjust="spacingAndGlyphs" >Complete</text>
<text x="278.4" y="277.75" font-size="6.5" fill="#48486a" textLength="17.34" lengthAdjust="spacingAndGlyphs" >Priority</text>
<text x="307.1" y="277.75" font-size="6.5" fill="#48486a" textLength="16.29" lengthAdjust="spacingAndGlyphs" >Status</text>
<text x="341.1" y="277.75" font-size="6.5" fill="#48486a" textLength="23.65" lengthAdjust="spacingAndGlyphs" >Due Date</text>
<text x="378.4" y="277.75" font-size="6.5" fill="#48486a" textLength="29.43" lengthAdjust="spacingAndGlyphs" >Assigned By</text>
<text x="420" y="277.75" font-size="6.5" fill="#48486a" textLength="28.91" lengthAdjust="spacingAndGlyphs" >Assigned to</text>
<text x="494.3" y="277.75" font-size="6.5" fill="#48486a" textLength="27.33" lengthAdjust="spacingAndGlyphs" >Created By</text>
<text x="533.4" y="277.75" font-size="6.5" fill="#48486a" textLength="33.64" lengthAdjust="spacingAndGlyphs" >Created Date</text>
<text x="578.1" y="277.75" font-size="6.5" fill="#48486a" textLength="16.29" lengthAdjust="spacingAndGlyphs" >Owner</text>
<text x="615.5" y="277.75" font-size="6.5" fill="#48486a" textLength="29.43" lengthAdjust="spacingAndGlyphs" >Assign Date</text>
<text x="655.6" y="277.75" font-size="6.5" fill="#48486a" textLength="38.89" lengthAdjust="spacingAndGlyphs" >Overdue (Days)</text>
<defs><radialGradient id="gc" cx="0.4" cy="0.35" r="0.7"><stop offset="0" stop-color="#56d064"/><stop offset="1" stop-color="#18a02c"/></radialGradient></defs>
<rect x="105.2" y="283.6" width="6.6" height="5.2" fill="#e9eef9" stroke="#a4b2d6" stroke-width="0.6"/>
<text x="142.4" y="288.65" font-size="6.5" fill="#44445a" textLength="28.38" lengthAdjust="spacingAndGlyphs" >TSK000014</text>
<text x="174.8" y="288.65" font-size="6.5" fill="#44445a" textLength="24.7" lengthAdjust="spacingAndGlyphs" >Marketing</text>
<text x="241.3" y="288.65" font-size="6.5" text-anchor="end" fill="#44445a" textLength="6.31" lengthAdjust="spacingAndGlyphs" >12</text>
<text x="259.4" y="288.65" font-size="6.5" text-anchor="middle" fill="#44445a" textLength="8.94" lengthAdjust="spacingAndGlyphs" >0%</text>
<text x="278.4" y="288.65" font-size="6.5" fill="#44445a" textLength="19.45" lengthAdjust="spacingAndGlyphs" >Medium</text>
<text x="307" y="288.65" font-size="6.5" fill="#44445a" textLength="29.43" lengthAdjust="spacingAndGlyphs" >Not Started</text>
<text x="341.1" y="288.65" font-size="6.5" fill="#44445a" textLength="32.59" lengthAdjust="spacingAndGlyphs" >07/Nov/2017</text>
<text x="378.4" y="288.65" font-size="6.5" fill="#44445a" textLength="33.11" lengthAdjust="spacingAndGlyphs" >Kamil Wilkosz</text>
<text x="420" y="288.65" font-size="6.5" fill="#44445a" textLength="39.42" lengthAdjust="spacingAndGlyphs" >Adam Bednarek</text>
<text x="494.3" y="288.65" font-size="6.5" fill="#44445a" textLength="33.11" lengthAdjust="spacingAndGlyphs" >Kamil Wilkosz</text>
<text x="533.4" y="288.65" font-size="6.5" fill="#44445a" textLength="31.54" lengthAdjust="spacingAndGlyphs" >30/Oct/2017</text>
<text x="578.1" y="288.65" font-size="6.5" fill="#44445a" textLength="33.11" lengthAdjust="spacingAndGlyphs" >Kamil Wilkosz</text>
<text x="615.5" y="288.65" font-size="6.5" fill="#44445a" textLength="32.59" lengthAdjust="spacingAndGlyphs" >22/Dec/2017</text>
<g transform="translate(104.2,292.5)"><circle cx="3.9" cy="3.9" r="3.8" fill="url(#gc)"/><path d="M2 4 L3.4 5.5 L6 2.6" stroke="#ffffff" stroke-width="1.1" fill="none"/></g>
<text x="142.4" y="298.65" font-size="6.5" fill="#44445a" textLength="28.38" lengthAdjust="spacingAndGlyphs" >TSK000015</text>
<text x="174.8" y="298.65" font-size="6.5" fill="#44445a" textLength="15.77" lengthAdjust="spacingAndGlyphs" >mBOM</text>
<text x="241.3" y="298.65" font-size="6.5" text-anchor="end" fill="#44445a" textLength="3.15" lengthAdjust="spacingAndGlyphs" >4</text>
<rect x="242.9" y="292" width="33" height="8.6" fill="#0a77d0" />
<text x="259.7" y="298.65" font-size="6.5" text-anchor="middle" fill="#ffffff" textLength="15.24" lengthAdjust="spacingAndGlyphs" >100%</text>
<text x="278.4" y="298.65" font-size="6.5" fill="#44445a" textLength="19.45" lengthAdjust="spacingAndGlyphs" >Medium</text>
<text x="307" y="298.65" font-size="6.5" fill="#44445a" textLength="26.81" lengthAdjust="spacingAndGlyphs" >Completed</text>
<text x="341.1" y="298.65" font-size="6.5" fill="#44445a" textLength="32.59" lengthAdjust="spacingAndGlyphs" >02/Nov/2017</text>
<text x="494.3" y="298.65" font-size="6.5" fill="#44445a" textLength="33.11" lengthAdjust="spacingAndGlyphs" >Kamil Wilkosz</text>
<text x="533.4" y="298.65" font-size="6.5" fill="#44445a" textLength="31.54" lengthAdjust="spacingAndGlyphs" >30/Oct/2017</text>
<text x="578.1" y="298.65" font-size="6.5" fill="#44445a" textLength="33.11" lengthAdjust="spacingAndGlyphs" >Kamil Wilkosz</text>
<text x="615.5" y="298.65" font-size="6.5" fill="#44445a" textLength="31.54" lengthAdjust="spacingAndGlyphs" >30/Oct/2017</text>
<g transform="translate(104.2,302.5)"><circle cx="3.9" cy="3.9" r="3.8" fill="url(#gc)"/><path d="M2 4 L3.4 5.5 L6 2.6" stroke="#ffffff" stroke-width="1.1" fill="none"/></g>
<text x="142.4" y="308.65" font-size="6.5" fill="#44445a" textLength="28.38" lengthAdjust="spacingAndGlyphs" >TSK000016</text>
<text x="174.8" y="308.65" font-size="6.5" fill="#44445a" textLength="14.19" lengthAdjust="spacingAndGlyphs" >eBOM</text>
<text x="241.3" y="308.65" font-size="6.5" text-anchor="end" fill="#44445a" textLength="3.15" lengthAdjust="spacingAndGlyphs" >4</text>
<rect x="242.9" y="302" width="33" height="8.6" fill="#0a77d0" />
<text x="259.7" y="308.65" font-size="6.5" text-anchor="middle" fill="#ffffff" textLength="15.24" lengthAdjust="spacingAndGlyphs" >100%</text>
<text x="278.4" y="308.65" font-size="6.5" fill="#44445a" textLength="19.45" lengthAdjust="spacingAndGlyphs" >Medium</text>
<text x="307" y="308.65" font-size="6.5" fill="#44445a" textLength="26.81" lengthAdjust="spacingAndGlyphs" >Completed</text>
<text x="341.1" y="308.65" font-size="6.5" fill="#44445a" textLength="32.59" lengthAdjust="spacingAndGlyphs" >02/Nov/2017</text>
<text x="494.3" y="308.65" font-size="6.5" fill="#44445a" textLength="33.11" lengthAdjust="spacingAndGlyphs" >Kamil Wilkosz</text>
<text x="533.4" y="308.65" font-size="6.5" fill="#44445a" textLength="31.54" lengthAdjust="spacingAndGlyphs" >30/Oct/2017</text>
<text x="578.1" y="308.65" font-size="6.5" fill="#44445a" textLength="33.11" lengthAdjust="spacingAndGlyphs" >Kamil Wilkosz</text>
<text x="615.5" y="308.65" font-size="6.5" fill="#44445a" textLength="31.54" lengthAdjust="spacingAndGlyphs" >30/Oct/2017</text>
<rect x="104.1" y="314.5" width="8.6" height="4" fill="#f6f6f6" stroke="#9a9a9a" stroke-width="0.5"/>
<rect x="105.1" y="315.6" width="3.2" height="1.8" fill="#5a5a5a" />
<rect x="108.8" y="315.8" width="1.6" height="1.4" fill="#9a9a9a" />
<text x="142.4" y="318.65" font-size="6.5" fill="#44445a" textLength="28.38" lengthAdjust="spacingAndGlyphs" >TSK000017</text>
<text x="174.8" y="318.65" font-size="6.5" fill="#44445a" textLength="25.75" lengthAdjust="spacingAndGlyphs" >Sales BOM</text>
<text x="241.3" y="318.65" font-size="6.5" text-anchor="end" fill="#44445a" textLength="3.15" lengthAdjust="spacingAndGlyphs" >4</text>
<text x="259.4" y="318.65" font-size="6.5" text-anchor="middle" fill="#44445a" textLength="8.94" lengthAdjust="spacingAndGlyphs" >0%</text>
<text x="278.4" y="318.65" font-size="6.5" fill="#44445a" textLength="19.45" lengthAdjust="spacingAndGlyphs" >Medium</text>
<text x="307" y="318.65" font-size="6.5" fill="#44445a" textLength="28.91" lengthAdjust="spacingAndGlyphs" >In Progress</text>
<text x="341.1" y="318.65" font-size="6.5" fill="#44445a" textLength="32.59" lengthAdjust="spacingAndGlyphs" >02/Nov/2017</text>
<text x="378.4" y="318.65" font-size="6.5" fill="#44445a" textLength="33.11" lengthAdjust="spacingAndGlyphs" >Kamil Wilkosz</text>
<text x="420" y="318.65" font-size="6.5" fill="#44445a" textLength="43.1" lengthAdjust="spacingAndGlyphs" >Agata Jankowska</text>
<text x="494.3" y="318.65" font-size="6.5" fill="#44445a" textLength="33.11" lengthAdjust="spacingAndGlyphs" >Kamil Wilkosz</text>
<text x="533.4" y="318.65" font-size="6.5" fill="#44445a" textLength="31.54" lengthAdjust="spacingAndGlyphs" >30/Oct/2017</text>
<text x="578.1" y="318.65" font-size="6.5" fill="#44445a" textLength="33.11" lengthAdjust="spacingAndGlyphs" >Kamil Wilkosz</text>
<text x="615.5" y="318.65" font-size="6.5" fill="#44445a" textLength="32.59" lengthAdjust="spacingAndGlyphs" >22/Dec/2017</text>
<rect x="104.1" y="324.5" width="8.6" height="4" fill="#f6f6f6" stroke="#9a9a9a" stroke-width="0.5"/>
<rect x="105.1" y="325.6" width="3.2" height="1.8" fill="#5a5a5a" />
<rect x="108.8" y="325.8" width="1.6" height="1.4" fill="#9a9a9a" />
<text x="142.4" y="328.65" font-size="6.5" fill="#44445a" textLength="28.38" lengthAdjust="spacingAndGlyphs" >TSK000018</text>
<text x="174.8" y="328.65" font-size="6.5" fill="#44445a" textLength="30.48" lengthAdjust="spacingAndGlyphs" >Service BOM</text>
<text x="241.3" y="328.65" font-size="6.5" text-anchor="end" fill="#44445a" textLength="3.15" lengthAdjust="spacingAndGlyphs" >4</text>
<text x="259.4" y="328.65" font-size="6.5" text-anchor="middle" fill="#44445a" textLength="8.94" lengthAdjust="spacingAndGlyphs" >0%</text>
<text x="278.4" y="328.65" font-size="6.5" fill="#44445a" textLength="19.45" lengthAdjust="spacingAndGlyphs" >Medium</text>
<text x="307" y="328.65" font-size="6.5" fill="#44445a" textLength="28.91" lengthAdjust="spacingAndGlyphs" >In Progress</text>
<text x="341.1" y="328.65" font-size="6.5" fill="#44445a" textLength="32.59" lengthAdjust="spacingAndGlyphs" >02/Nov/2017</text>
<text x="378.4" y="328.65" font-size="6.5" fill="#44445a" textLength="33.11" lengthAdjust="spacingAndGlyphs" >Kamil Wilkosz</text>
<text x="420" y="328.65" font-size="6.5" fill="#44445a" textLength="41.52" lengthAdjust="spacingAndGlyphs" >Marcin Muzyczka</text>
<text x="494.3" y="328.65" font-size="6.5" fill="#44445a" textLength="33.11" lengthAdjust="spacingAndGlyphs" >Kamil Wilkosz</text>
<text x="533.4" y="328.65" font-size="6.5" fill="#44445a" textLength="31.54" lengthAdjust="spacingAndGlyphs" >30/Oct/2017</text>
<text x="578.1" y="328.65" font-size="6.5" fill="#44445a" textLength="33.11" lengthAdjust="spacingAndGlyphs" >Kamil Wilkosz</text>
<text x="615.5" y="328.65" font-size="6.5" fill="#44445a" textLength="32.59" lengthAdjust="spacingAndGlyphs" >22/Dec/2017</text>
<rect x="105.2" y="333.6" width="6.6" height="5.2" fill="#e9eef9" stroke="#a4b2d6" stroke-width="0.6"/>
<text x="142.4" y="338.65" font-size="6.5" fill="#44445a" textLength="28.38" lengthAdjust="spacingAndGlyphs" >TSK000019</text>
<text x="174.8" y="338.65" font-size="6.5" fill="#44445a" textLength="9.46" lengthAdjust="spacingAndGlyphs" >SIM</text>
<text x="241.3" y="338.65" font-size="6.5" text-anchor="end" fill="#44445a" textLength="6.31" lengthAdjust="spacingAndGlyphs" >10</text>
<text x="259.4" y="338.65" font-size="6.5" text-anchor="middle" fill="#44445a" textLength="8.94" lengthAdjust="spacingAndGlyphs" >0%</text>
<text x="278.4" y="338.65" font-size="6.5" fill="#44445a" textLength="19.45" lengthAdjust="spacingAndGlyphs" >Medium</text>
<text x="307" y="338.65" font-size="6.5" fill="#44445a" textLength="29.43" lengthAdjust="spacingAndGlyphs" >Not Started</text>
<text x="341.1" y="338.65" font-size="6.5" fill="#44445a" textLength="32.59" lengthAdjust="spacingAndGlyphs" >08/Nov/2017</text>
<text x="378.4" y="338.65" font-size="6.5" fill="#44445a" textLength="33.11" lengthAdjust="spacingAndGlyphs" >Kamil Wilkosz</text>
<text x="420" y="338.65" font-size="6.5" fill="#44445a" textLength="29.43" lengthAdjust="spacingAndGlyphs" >Adam Bator</text>
<text x="494.3" y="338.65" font-size="6.5" fill="#44445a" textLength="33.11" lengthAdjust="spacingAndGlyphs" >Kamil Wilkosz</text>
<text x="533.4" y="338.65" font-size="6.5" fill="#44445a" textLength="31.54" lengthAdjust="spacingAndGlyphs" >30/Oct/2017</text>
<text x="578.1" y="338.65" font-size="6.5" fill="#44445a" textLength="33.11" lengthAdjust="spacingAndGlyphs" >Kamil Wilkosz</text>
<text x="615.5" y="338.65" font-size="6.5" fill="#44445a" textLength="32.59" lengthAdjust="spacingAndGlyphs" >22/Dec/2017</text>
<g transform="translate(104.2,342.5)"><circle cx="3.9" cy="3.9" r="3.8" fill="url(#gc)"/><path d="M2 4 L3.4 5.5 L6 2.6" stroke="#ffffff" stroke-width="1.1" fill="none"/></g>
<text x="142.4" y="348.65" font-size="6.5" fill="#44445a" textLength="28.38" lengthAdjust="spacingAndGlyphs" >TSK000020</text>
<text x="174.8" y="348.65" font-size="6.5" fill="#44445a" textLength="11.04" lengthAdjust="spacingAndGlyphs" >Flow</text>
<text x="241.3" y="348.65" font-size="6.5" text-anchor="end" fill="#44445a" textLength="6.31" lengthAdjust="spacingAndGlyphs" >15</text>
<rect x="242.9" y="342" width="33" height="8.6" fill="#0a77d0" />
<text x="259.7" y="348.65" font-size="6.5" text-anchor="middle" fill="#ffffff" textLength="15.24" lengthAdjust="spacingAndGlyphs" >100%</text>
<text x="278.4" y="348.65" font-size="6.5" fill="#44445a" textLength="19.45" lengthAdjust="spacingAndGlyphs" >Medium</text>
<text x="307" y="348.65" font-size="6.5" fill="#44445a" textLength="26.81" lengthAdjust="spacingAndGlyphs" >Completed</text>
<text x="341.1" y="348.65" font-size="6.5" fill="#44445a" textLength="32.59" lengthAdjust="spacingAndGlyphs" >08/Nov/2017</text>
<text x="494.3" y="348.65" font-size="6.5" fill="#44445a" textLength="33.11" lengthAdjust="spacingAndGlyphs" >Kamil Wilkosz</text>
<text x="533.4" y="348.65" font-size="6.5" fill="#44445a" textLength="31.54" lengthAdjust="spacingAndGlyphs" >30/Oct/2017</text>
<text x="578.1" y="348.65" font-size="6.5" fill="#44445a" textLength="33.11" lengthAdjust="spacingAndGlyphs" >Kamil Wilkosz</text>
<text x="615.5" y="348.65" font-size="6.5" fill="#44445a" textLength="31.54" lengthAdjust="spacingAndGlyphs" >30/Oct/2017</text>
<g transform="translate(104.2,352.5)"><circle cx="3.9" cy="3.9" r="3.8" fill="url(#gc)"/><path d="M2 4 L3.4 5.5 L6 2.6" stroke="#ffffff" stroke-width="1.1" fill="none"/></g>
<text x="142.4" y="358.65" font-size="6.5" fill="#44445a" textLength="28.38" lengthAdjust="spacingAndGlyphs" >TSK000022</text>
<text x="174.8" y="358.65" font-size="6.5" fill="#44445a" textLength="15.77" lengthAdjust="spacingAndGlyphs" >Test A</text>
<text x="241.3" y="358.65" font-size="6.5" text-anchor="end" fill="#44445a" textLength="6.31" lengthAdjust="spacingAndGlyphs" >10</text>
<rect x="242.9" y="352" width="33" height="8.6" fill="#0a77d0" />
<text x="259.7" y="358.65" font-size="6.5" text-anchor="middle" fill="#ffffff" textLength="15.24" lengthAdjust="spacingAndGlyphs" >100%</text>
<text x="278.4" y="358.65" font-size="6.5" fill="#44445a" textLength="19.45" lengthAdjust="spacingAndGlyphs" >Medium</text>
<text x="307" y="358.65" font-size="6.5" fill="#44445a" textLength="26.81" lengthAdjust="spacingAndGlyphs" >Completed</text>
<text x="341.1" y="358.65" font-size="6.5" fill="#44445a" textLength="32.59" lengthAdjust="spacingAndGlyphs" >15/Nov/2017</text>
<text x="494.3" y="358.65" font-size="6.5" fill="#44445a" textLength="33.11" lengthAdjust="spacingAndGlyphs" >Kamil Wilkosz</text>
<text x="533.4" y="358.65" font-size="6.5" fill="#44445a" textLength="31.54" lengthAdjust="spacingAndGlyphs" >30/Oct/2017</text>
<text x="578.1" y="358.65" font-size="6.5" fill="#44445a" textLength="33.11" lengthAdjust="spacingAndGlyphs" >Kamil Wilkosz</text>
<text x="615.5" y="358.65" font-size="6.5" fill="#44445a" textLength="31.54" lengthAdjust="spacingAndGlyphs" >30/Oct/2017</text>
<rect x="104.1" y="364.5" width="8.6" height="4" fill="#f6f6f6" stroke="#9a9a9a" stroke-width="0.5"/>
<rect x="105.1" y="365.6" width="3.2" height="1.8" fill="#5a5a5a" />
<rect x="108.8" y="365.8" width="1.6" height="1.4" fill="#9a9a9a" />
<text x="142.4" y="368.65" font-size="6.5" fill="#44445a" textLength="28.38" lengthAdjust="spacingAndGlyphs" >TSK000023</text>
<text x="174.8" y="368.65" font-size="6.5" fill="#44445a" textLength="15.77" lengthAdjust="spacingAndGlyphs" >Test B</text>
<text x="241.3" y="368.65" font-size="6.5" text-anchor="end" fill="#44445a" textLength="3.15" lengthAdjust="spacingAndGlyphs" >8</text>
<rect x="242.9" y="362" width="17" height="8.6" fill="#0a77d0" />
<text x="253.5" y="368.65" font-size="6.5" fill="#ffffff" textLength="6.31" lengthAdjust="spacingAndGlyphs" >50</text>
<text x="259.8" y="368.65" font-size="6.5" fill="#44445a" textLength="5.78" lengthAdjust="spacingAndGlyphs" >%</text>
<text x="278.4" y="368.65" font-size="6.5" fill="#44445a" textLength="19.45" lengthAdjust="spacingAndGlyphs" >Medium</text>
<text x="307" y="368.65" font-size="6.5" fill="#44445a" textLength="28.91" lengthAdjust="spacingAndGlyphs" >In Progress</text>
<text x="341.1" y="368.65" font-size="6.5" fill="#44445a" textLength="32.59" lengthAdjust="spacingAndGlyphs" >15/Nov/2017</text>
<text x="494.3" y="368.65" font-size="6.5" fill="#44445a" textLength="33.11" lengthAdjust="spacingAndGlyphs" >Kamil Wilkosz</text>
<text x="533.4" y="368.65" font-size="6.5" fill="#44445a" textLength="31.54" lengthAdjust="spacingAndGlyphs" >30/Oct/2017</text>
<text x="578.1" y="368.65" font-size="6.5" fill="#44445a" textLength="33.11" lengthAdjust="spacingAndGlyphs" >Kamil Wilkosz</text>
<text x="615.5" y="368.65" font-size="6.5" fill="#44445a" textLength="31.54" lengthAdjust="spacingAndGlyphs" >30/Oct/2017</text>
<rect x="105.2" y="373.6" width="6.6" height="5.2" fill="#e9eef9" stroke="#a4b2d6" stroke-width="0.6"/>
<text x="142.4" y="378.65" font-size="6.5" fill="#44445a" textLength="28.38" lengthAdjust="spacingAndGlyphs" >TSK000024</text>
<text x="174.8" y="378.65" font-size="6.5" fill="#44445a" textLength="15.77" lengthAdjust="spacingAndGlyphs" >Test C</text>
<text x="241.3" y="378.65" font-size="6.5" text-anchor="end" fill="#44445a" textLength="3.15" lengthAdjust="spacingAndGlyphs" >6</text>
<text x="259.4" y="378.65" font-size="6.5" text-anchor="middle" fill="#44445a" textLength="8.94" lengthAdjust="spacingAndGlyphs" >0%</text>
<text x="278.4" y="378.65" font-size="6.5" fill="#44445a" textLength="19.45" lengthAdjust="spacingAndGlyphs" >Medium</text>
<text x="307" y="378.65" font-size="6.5" fill="#44445a" textLength="29.43" lengthAdjust="spacingAndGlyphs" >Not Started</text>
<text x="341.1" y="378.65" font-size="6.5" fill="#44445a" textLength="32.59" lengthAdjust="spacingAndGlyphs" >15/Nov/2017</text>
<text x="494.3" y="378.65" font-size="6.5" fill="#44445a" textLength="33.11" lengthAdjust="spacingAndGlyphs" >Kamil Wilkosz</text>
<text x="533.4" y="378.65" font-size="6.5" fill="#44445a" textLength="31.54" lengthAdjust="spacingAndGlyphs" >30/Oct/2017</text>
<text x="578.1" y="378.65" font-size="6.5" fill="#44445a" textLength="33.11" lengthAdjust="spacingAndGlyphs" >Kamil Wilkosz</text>
<text x="615.5" y="378.65" font-size="6.5" fill="#44445a" textLength="31.54" lengthAdjust="spacingAndGlyphs" >30/Oct/2017</text>
<g transform="translate(104.2,382.5)"><circle cx="3.9" cy="3.9" r="3.8" fill="url(#gc)"/><path d="M2 4 L3.4 5.5 L6 2.6" stroke="#ffffff" stroke-width="1.1" fill="none"/></g>
<text x="142.4" y="388.65" font-size="6.5" fill="#44445a" textLength="28.38" lengthAdjust="spacingAndGlyphs" >TSK000099</text>
<text x="174.8" y="388.65" font-size="6.5" fill="#44445a" textLength="25.23" lengthAdjust="spacingAndGlyphs" >Design 3D</text>
<text x="241.3" y="388.65" font-size="6.5" text-anchor="end" fill="#44445a" textLength="3.15" lengthAdjust="spacingAndGlyphs" >8</text>
<rect x="242.9" y="382" width="33" height="8.6" fill="#0a77d0" />
<text x="259.7" y="388.65" font-size="6.5" text-anchor="middle" fill="#ffffff" textLength="15.24" lengthAdjust="spacingAndGlyphs" >100%</text>
<text x="278.4" y="388.65" font-size="6.5" fill="#44445a" textLength="19.45" lengthAdjust="spacingAndGlyphs" >Medium</text>
<text x="307" y="388.65" font-size="6.5" fill="#44445a" textLength="26.81" lengthAdjust="spacingAndGlyphs" >Completed</text>
<text x="341.1" y="388.65" font-size="6.5" fill="#44445a" textLength="31.54" lengthAdjust="spacingAndGlyphs" >31/Oct/2017</text>
<text x="378.4" y="388.65" font-size="6.5" fill="#44445a" textLength="33.11" lengthAdjust="spacingAndGlyphs" >Kamil Wilkosz</text>
<text x="420" y="388.65" font-size="6.5" fill="#44445a" textLength="33.11" lengthAdjust="spacingAndGlyphs" >Kamil Wilkosz</text>
<text x="494.3" y="388.65" font-size="6.5" fill="#44445a" textLength="33.11" lengthAdjust="spacingAndGlyphs" >Kamil Wilkosz</text>
<text x="533.4" y="388.65" font-size="6.5" fill="#44445a" textLength="32.59" lengthAdjust="spacingAndGlyphs" >22/Dec/2017</text>
<text x="578.1" y="388.65" font-size="6.5" fill="#44445a" textLength="33.11" lengthAdjust="spacingAndGlyphs" >Kamil Wilkosz</text>
<text x="615.5" y="388.65" font-size="6.5" fill="#44445a" textLength="32.59" lengthAdjust="spacingAndGlyphs" >22/Dec/2017</text>
<rect x="690.1" y="281.2" width="8.9" height="110" fill="#ececec" />
<rect x="690.1" y="281.2" width="8.9" height="9.3" fill="#f0f0f0" />
<rect x="690.1" y="290.5" width="8.9" height="60.3" fill="#cacaca" />
<rect x="690.1" y="381.2" width="8.9" height="10" fill="#f0f0f0" />
<path d="M692.6 286.6 L694.6 284.4 L696.6 286.6" fill="none" stroke="#555" stroke-width="0.8" />
<path d="M692.6 385.4 L694.6 387.6 L696.6 385.4" fill="none" stroke="#555" stroke-width="0.8" />
<rect x="98" y="407.2" width="601" height="8.8" fill="#e8e8e8" />
<rect x="107.2" y="407.3" width="492.8" height="8.5" fill="#c8c8c8" />
<path d="M103 409.4 L101 411.6 L103 413.8" fill="none" stroke="#555" stroke-width="0.8" />
<path d="M693 409.4 L695 411.6 L693 413.8" fill="none" stroke="#555" stroke-width="0.8" />
</svg>
</body></html>
